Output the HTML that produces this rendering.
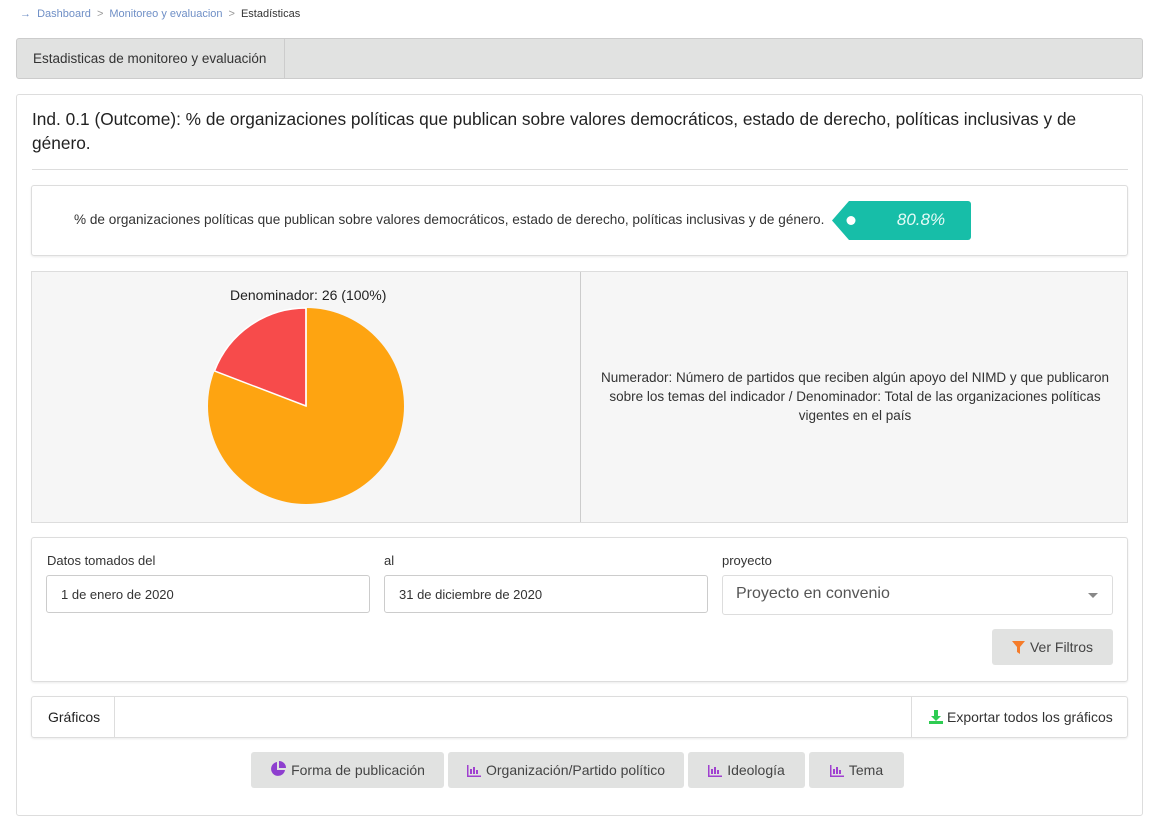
<!DOCTYPE html>
<html><head><meta charset="utf-8"><style>
*{box-sizing:border-box;margin:0;padding:0}
body{width:1158px;height:831px;background:#fff;font-family:"Liberation Sans",sans-serif;color:#333;position:relative;overflow:hidden}
.abs{position:absolute;white-space:nowrap}
.bc{left:20px;top:8px;font-size:11px;color:#6f8fc6}
.bc span{color:#999;margin:0 6px}
.bc b{font-weight:normal;color:#333}
.tabbar{left:16px;top:38px;width:1127px;height:41px;background:#e1e2e1;border:1px solid #ccc;border-radius:3px}
.tab{left:0;top:0;height:39px;width:268px;border-right:1px solid #ccc;font-size:13.5px;padding:12px 16px;color:#333}
.card{left:16px;top:94px;width:1127px;height:722px;border:1px solid #ddd;border-radius:3px}
h1{position:absolute;left:32px;top:107px;width:1090px;font-size:17.3px;font-weight:normal;line-height:24px;color:#222}
.hr{left:32px;top:169px;width:1096px;height:1px;background:#ddd}
.box{border:1px solid #ddd;border-radius:3px;box-shadow:0 1px 2px rgba(0,0,0,.08)}
.lbl{font-size:13px;color:#333}
.inp{height:38px;border:1px solid #ccc;border-radius:3px;font-size:13px;padding:11px 14px;color:#333}
.btn{background:#e1e2e1;border-radius:3px;font-size:14px;color:#444;text-align:center;line-height:36px;height:36px}
.btn svg{vertical-align:-2px;margin-right:5px}
</style></head><body>
<div class="abs bc">→ &nbsp;Dashboard<span>&gt;</span>Monitoreo y evaluacion<span>&gt;</span><b>Estadísticas</b></div>
<div class="abs tabbar"><div class="abs tab">Estadisticas de monitoreo y evaluación</div></div>
<div class="abs card"></div>
<h1>Ind. 0.1 (Outcome): % de organizaciones políticas que publican sobre valores democráticos, estado de derecho, políticas inclusivas y de género.</h1>
<div class="abs hr"></div>
<div class="abs box" style="left:31px;top:185px;width:1097px;height:71px"></div>
<div class="abs" style="left:74px;top:212px;font-size:13.6px">% de organizaciones políticas que publican sobre valores democráticos, estado de derecho, políticas inclusivas y de género.</div>
<svg class="abs" style="left:832px;top:201px" width="140" height="39"><path d="M17 0H136a3 3 0 0 1 3 3V36a3 3 0 0 1-3 3H17L0 19.5Z" fill="#17bea8"/><circle cx="19" cy="19.5" r="4.5" fill="#fff"/><text x="89" y="24" font-family="Liberation Sans" font-size="17" font-style="italic" fill="#e6fbf7" text-anchor="middle">80.8%</text></svg>
<div class="abs" style="left:31px;top:271px;width:1097px;height:252px;border:1px solid #ddd;background:#f6f6f6"></div>
<div class="abs" style="left:580px;top:272px;width:1px;height:250px;background:#ccc"></div>
<div class="abs" style="left:230px;top:287px;font-size:14px;color:#222">Denominador: 26 (100%)</div>
<svg class="abs" style="left:206px;top:306px" width="200" height="200"><circle cx="100" cy="100" r="98" fill="#fea411"/><path d="M100 100L100 2A98 98 0 0 0 8.5 65Z" fill="#f74b4b" stroke="#fff" stroke-width="1.5"/><line x1="100" y1="100" x2="100" y2="2" stroke="#fff" stroke-width="1.5"/></svg>
<div class="abs" style="left:590px;top:368px;width:530px;text-align:center;font-size:13.5px;line-height:19px;color:#333;white-space:normal">Numerador: Número de partidos que reciben algún apoyo del NIMD y que publicaron sobre los temas del indicador / Denominador: Total de las organizaciones políticas vigentes en el país</div>
<div class="abs box" style="left:31px;top:537px;width:1097px;height:145px"></div>
<div class="abs lbl" style="left:47px;top:553px">Datos tomados del</div>
<div class="abs lbl" style="left:384px;top:553px">al</div>
<div class="abs lbl" style="left:722px;top:553px">proyecto</div>
<div class="abs inp" style="left:46px;top:575px;width:324px">1 de enero de 2020</div>
<div class="abs inp" style="left:384px;top:575px;width:324px">31 de diciembre de 2020</div>
<div class="abs inp" style="left:722px;top:575px;width:391px;height:40px;font-size:16px;padding:9px 13px;color:#555;border-color:#ddd">Proyecto en convenio<span style="position:absolute;right:14px;top:17px;border:5px solid transparent;border-top-color:#888"></span></div>
<div class="abs btn" style="left:992px;top:629px;width:121px"><svg width="13" height="13" viewBox="0 0 13 13"><path d="M0 0H13L8 6V13L5 11V6Z" fill="#f57c2a"/></svg>Ver Filtros</div>
<div class="abs box" style="left:31px;top:696px;width:1097px;height:42px"></div>
<div class="abs" style="left:32px;top:697px;width:83px;height:40px;border-right:1px solid #ddd;font-size:14px;padding:12px 16px;color:#222">Gráficos</div>
<div class="abs" style="left:911px;top:697px;width:216px;height:40px;border-left:1px solid #ddd;font-size:14px;padding:12px 0 0 17px;color:#333"><svg width="14" height="14" viewBox="0 0 14 14" style="vertical-align:-2px;margin-right:4px"><path d="M5 0H9V6H12L7 11L2 6H5Z" fill="#2ecc52"/><rect x="0" y="11" width="14" height="3" fill="#2ecc52"/></svg>Exportar todos los gráficos</div>
<div class="abs btn" style="left:251px;top:752px;width:193px"><svg width="16" height="16" viewBox="0 0 16 16"><path d="M7 1A7 7 0 1 0 15 9H7Z" fill="#8e3fcf"/><path d="M9 0A7 7 0 0 1 16 7H9Z" fill="#8e3fcf"/></svg>Forma de publicación</div>
<div class="abs btn" style="left:448px;top:752px;width:236px"><svg width="14" height="12" viewBox="0 0 14 12"><path d="M0 0V12H14V10.5H1.5V0Z M3 4h2v5H3z M6 2h2v7H6z M9 5h2v4H9z" fill="#a040d0"/></svg>Organización/Partido político</div>
<div class="abs btn" style="left:688px;top:752px;width:117px"><svg width="14" height="12" viewBox="0 0 14 12"><path d="M0 0V12H14V10.5H1.5V0Z M3 4h2v5H3z M6 2h2v7H6z M9 5h2v4H9z" fill="#a040d0"/></svg>Ideología</div>
<div class="abs btn" style="left:809px;top:752px;width:95px"><svg width="14" height="12" viewBox="0 0 14 12"><path d="M0 0V12H14V10.5H1.5V0Z M3 4h2v5H3z M6 2h2v7H6z M9 5h2v4H9z" fill="#a040d0"/></svg>Tema</div>
</body></html>
